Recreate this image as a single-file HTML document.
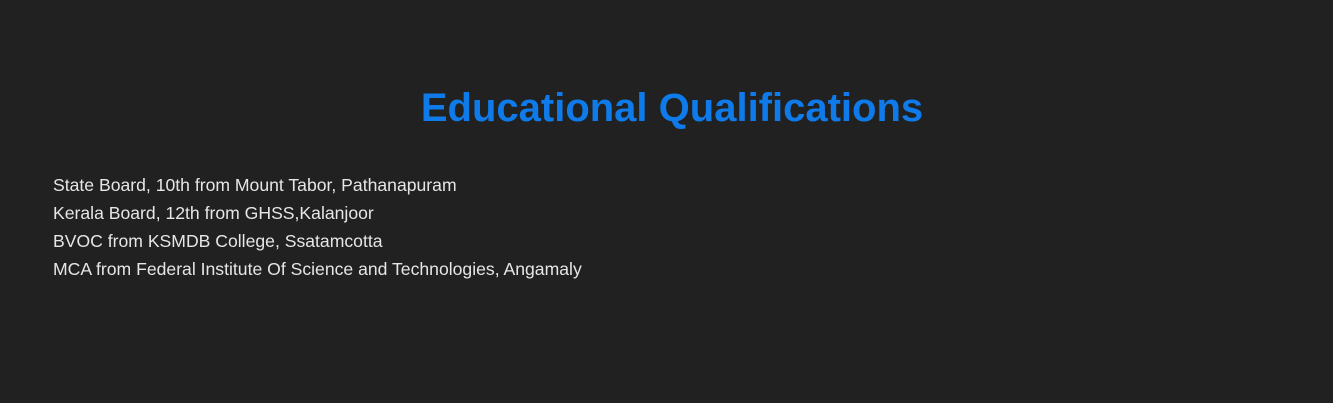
<!DOCTYPE html>
<html><head><style>
body{margin:0;background:#212121;width:1333px;height:403px;overflow:hidden;font-family:"Liberation Sans",sans-serif;}
h1{position:absolute;left:0;width:1344px;top:84px;margin:0;text-align:center;color:#0f7bea;font-size:40px;font-weight:bold;line-height:48px;}
.list{position:absolute;left:53px;top:171px;color:#e6e6e6;font-size:17.6px;line-height:28px;}
</style></head><body>
<h1>Educational Qualifications</h1>
<div class="list">
<div>State Board, 10th from Mount Tabor, Pathanapuram</div>
<div>Kerala Board, 12th from GHSS,Kalanjoor</div>
<div>BVOC from KSMDB College, Ssatamcotta</div>
<div>MCA from Federal Institute Of Science and Technologies, Angamaly</div>
</div>
</body></html>
